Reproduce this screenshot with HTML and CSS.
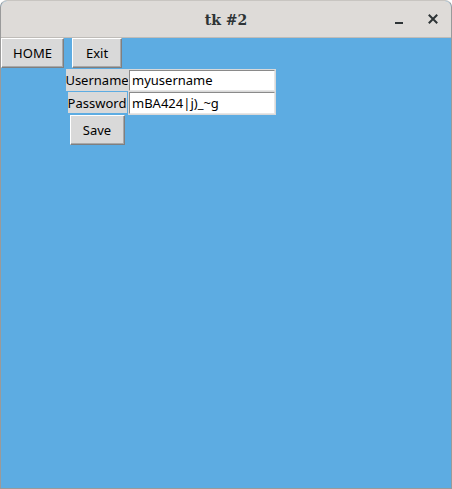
FILE: index.html
```html
<!DOCTYPE html>
<html>
<head>
<meta charset="utf-8">
<link rel="stylesheet" href="styles.css">
</head>
<body>
<div class="window">
  <div class="titlebar">
    <div class="title">tk #2</div>
    <div class="controls">
      <span class="ctl min"></span>
      <span class="ctl close">
        <svg width="10" height="10" viewBox="0 0 10 10"><path d="M1.5 1.5 L8.5 8.5 M8.5 1.5 L1.5 8.5" stroke="#2e3436" stroke-width="2" stroke-linecap="square"/></svg>
      </span>
    </div>
  </div>
  <div class="content">
    <div class="grid">
      <div class="cell c0 r0"><button class="btn home">HOME</button></div>
      <div class="cell c1 r0"><button class="btn exit">Exit</button></div>
      <div class="cell c1 r1"><span class="lbl user">Username</span></div>
      <div class="cell c2 r1"><div class="entry">myusername</div></div>
      <div class="cell c1 r2"><span class="lbl pass">Password</span></div>
      <div class="cell c2 r2"><div class="entry">mBA424|j)_~g</div></div>
      <div class="cell c1 r3"><button class="btn save">Save</button></div>
    </div>
  </div>
</div>
</body>
</html>
```
FILE: styles.css
```css
html, body {
  margin: 0;
  padding: 0;
  background: #ffffff;
}
.window {
  width: 452px;
  height: 489px;
  box-sizing: border-box;
  display: flex;
  flex-direction: column;
  overflow: hidden;
  border-radius: 7px 7px 0 0;
  border: 1px solid #9a9a9a;
  border-top-color: #c8c5c1;
  background: #5dace2;
}
.titlebar {
  height: 37px;
  flex: none;
  background: #dedbd8;
  border-bottom: 1px solid #bfbcb8;
  box-sizing: border-box;
  display: flex;
  align-items: center;
  justify-content: center;
  position: relative;
}
.title {
  font-family: "DejaVu Serif", serif;
  font-weight: bold;
  font-size: 14px;
  color: #2e3436;
  margin-top: 1px;
}
.controls {
  position: absolute;
  right: 0;
  top: 0;
  height: 36px;
  display: flex;
  align-items: center;
}
.ctl {
  display: flex;
  align-items: center;
  justify-content: center;
}
.min {
  width: 8px;
  height: 2px;
  background: #2e3436;
  margin-top: 8px;
  margin-right: 25px;
}
.close {
  width: 10px;
  height: 10px;
  margin-right: 13px;
}
.content {
  flex: 1;
  font-family: "Noto Sans", sans-serif;
  font-size: 13px;
  color: #000;
}
.grid {
  display: grid;
  grid-template-columns: 64px 64px 147px;
  grid-template-rows: 31px 22px 23px 32px;
}
.cell {
  display: flex;
  align-items: center;
  justify-content: center;
}
.c0 { grid-column: 1; }
.c1 { grid-column: 2; }
.c2 { grid-column: 3; justify-content: flex-start; }
.r0 { grid-row: 1; align-items: flex-start; }
.r1 { grid-row: 2; }
.r2 { grid-row: 3; }
.r3 { grid-row: 4; }
.btn {
  font-family: "Noto Sans", sans-serif;
  font-size: 13px;
  color: #000;
  background: #d9d9d9;
  height: 30px;
  padding: 0;
  margin: 0;
  box-sizing: border-box;
  border: 1px solid;
  border-color: #ffffff #7f7f7f #7f7f7f #ffffff;
  box-shadow: inset -1px -1px 0 #a8a8a8;
  display: flex;
  align-items: center;
  justify-content: center;
}
.home { width: 63px; margin-right: 1px; }
.exit { width: 50px; }
.save { width: 55px; }
.lbl {
  background: #d9d9d9;
  height: 21px;
  display: flex;
  align-items: center;
  justify-content: center;
  box-sizing: border-box;
}
.user { width: 63px; height: 22px; }
.pass { width: 59px; }
.entry {
  width: 146px;
  height: 21px;
  box-sizing: border-box;
  background: #ffffff;
  border: 1px solid;
  border-color: #8a8a8a #e6e6e6 #e6e6e6 #8a8a8a;
  box-shadow: 0 0 0 1px #d9d9d9;
  padding-left: 2px;
  display: flex;
  align-items: center;
  white-space: nowrap;
}
.r2 .entry { height: 22px; }
```
